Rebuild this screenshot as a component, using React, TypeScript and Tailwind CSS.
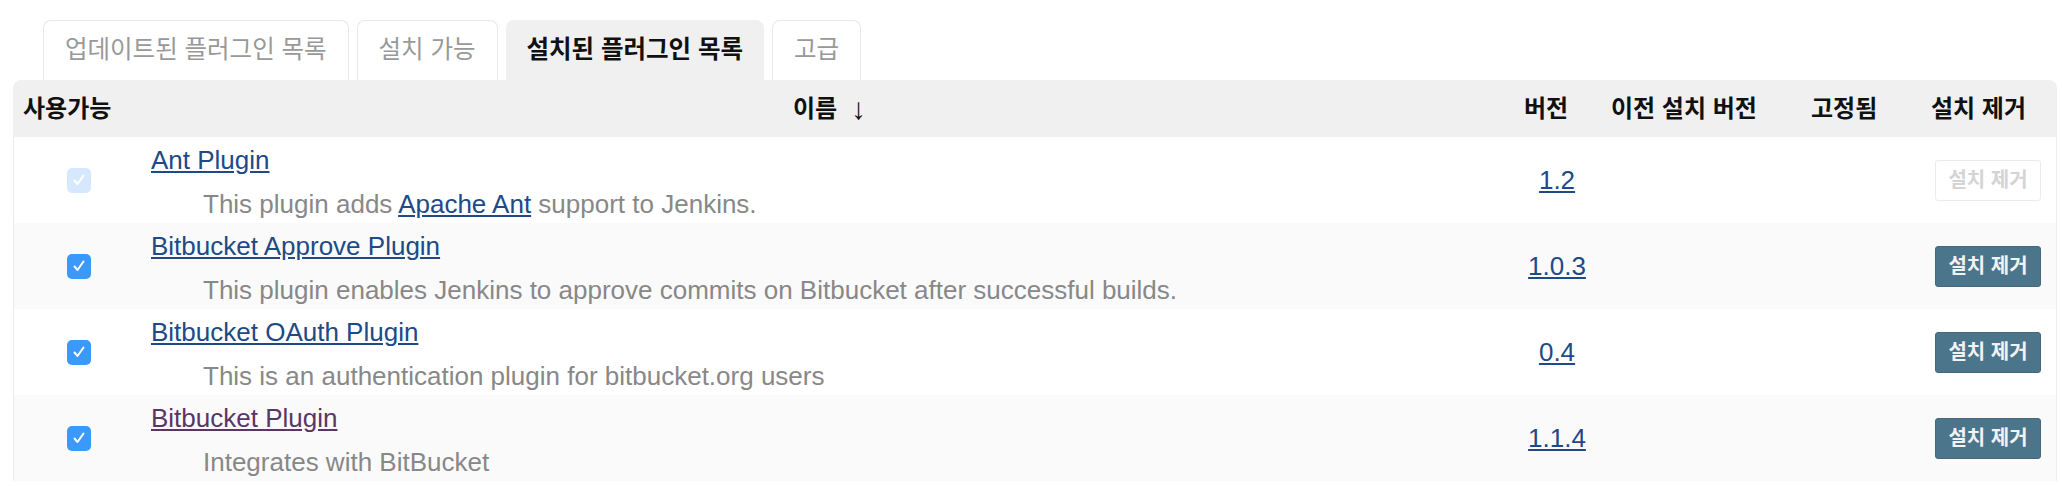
const tabs = [
  { label: '업데이트된 플러그인 목록', active: false },
  { label: '설치 가능', active: false },
  { label: '설치된 플러그인 목록', active: true },
  { label: '고급', active: false },
]

const plugins = [
  {
    name: 'Ant Plugin',
    desc: (
      <>
        This plugin adds <a className="text-[#204a87] underline">Apache Ant</a> support to Jenkins.
      </>
    ),
    version: '1.2',
    locked: true,
    visited: false,
  },
  {
    name: 'Bitbucket Approve Plugin',
    desc: 'This plugin enables Jenkins to approve commits on Bitbucket after successful builds.',
    version: '1.0.3',
    locked: false,
    visited: false,
  },
  {
    name: 'Bitbucket OAuth Plugin',
    desc: 'This is an authentication plugin for bitbucket.org users',
    version: '0.4',
    locked: false,
    visited: false,
  },
  {
    name: 'Bitbucket Plugin',
    desc: 'Integrates with BitBucket',
    version: '1.1.4',
    locked: false,
    visited: true,
  },
]

const cols = 'grid grid-cols-[130px_1fr_96px_195px_115px_141px]'

const Check = ({ disabled }: { disabled: boolean }) => (
  <span
    className={`flex h-[25px] w-[24px] items-center justify-center rounded-[5px] ${
      disabled ? 'bg-[#d6e8fd]' : 'bg-[#3b99fc]'
    }`}
  >
    <svg width="14" height="14" viewBox="0 0 14 14" fill="none">
      <path d="M2.5 7.5 L5.5 11 L11.5 2.5" stroke="white" strokeWidth="2" strokeLinecap="round" strokeLinejoin="round" />
    </svg>
  </span>
)

const App = () => {
  return (
    <div className="h-[486px] w-[2062px] overflow-hidden bg-white font-['Liberation_Sans','Noto_Sans_CJK_KR',sans-serif] text-[26px]">
      <div className="flex gap-2 pl-[43px] pt-[20px]">
        {tabs.map((t) => (
          <div
            key={t.label}
            className={`flex h-[60px] items-center rounded-t-[8px] px-[21px] text-[24.5px] ${
              t.active
                ? 'bg-[#f0f0f0] font-bold text-[#111]'
                : 'border border-b-0 border-[#e8e8e8] text-[#999]'
            }`}
          >
            {t.label}
          </div>
        ))}
      </div>

      <div className="ml-[13px] w-[2044px]">
        <div className={`${cols} h-[57px] items-center rounded-t-[8px] bg-[#f0f0f0] text-[24px] font-bold text-[#111]`}>
          <span className="pl-[10px]">사용가능</span>
          <span className="flex items-center justify-center pl-[6px]">
            이름
            <span className="ml-[14px] text-[30px] font-normal leading-none">↓</span>
          </span>
          <span className="pl-[14px]">버전</span>
          <span className="pl-[5px]">이전 설치 버전</span>
          <span className="pl-[10px]">고정됨</span>
          <span className="pl-[15px]">설치 제거</span>
        </div>

        {plugins.map((p, i) => (
          <div
            key={p.name}
            className={`${cols} h-[86px] items-center border-x border-[#ececec] ${i % 2 ? 'bg-[#fafafa]' : 'bg-white'}`}
          >
            <div className="flex justify-center">
              <Check disabled={p.locked} />
            </div>
            <div className="flex flex-col pl-[7px] pt-[5px] pb-px">
              <a className={`w-fit leading-[36px] underline ${p.visited ? 'text-[#5c3566]' : 'text-[#204a87]'}`}>
                {p.name}
              </a>
              <div className="mt-2 pl-[52px] leading-[36px] text-[#888]">{p.desc}</div>
            </div>
            <div className="text-center">
              <a className="text-[#204a87] underline">{p.version}</a>
            </div>
            <div />
            <div />
            <div className="pl-[20px]">
              <button
                className={`h-[41px] w-[106px] rounded-[3px] border text-[20px] font-bold ${
                  p.locked
                    ? 'border-[#ebebeb] bg-white text-[#d4d4d4]'
                    : 'border-[#45697c] bg-[#4b758b] text-[#f2f2f2]'
                }`}
              >
                설치 제거
              </button>
            </div>
          </div>
        ))}
      </div>
    </div>
  )
}

export default App
